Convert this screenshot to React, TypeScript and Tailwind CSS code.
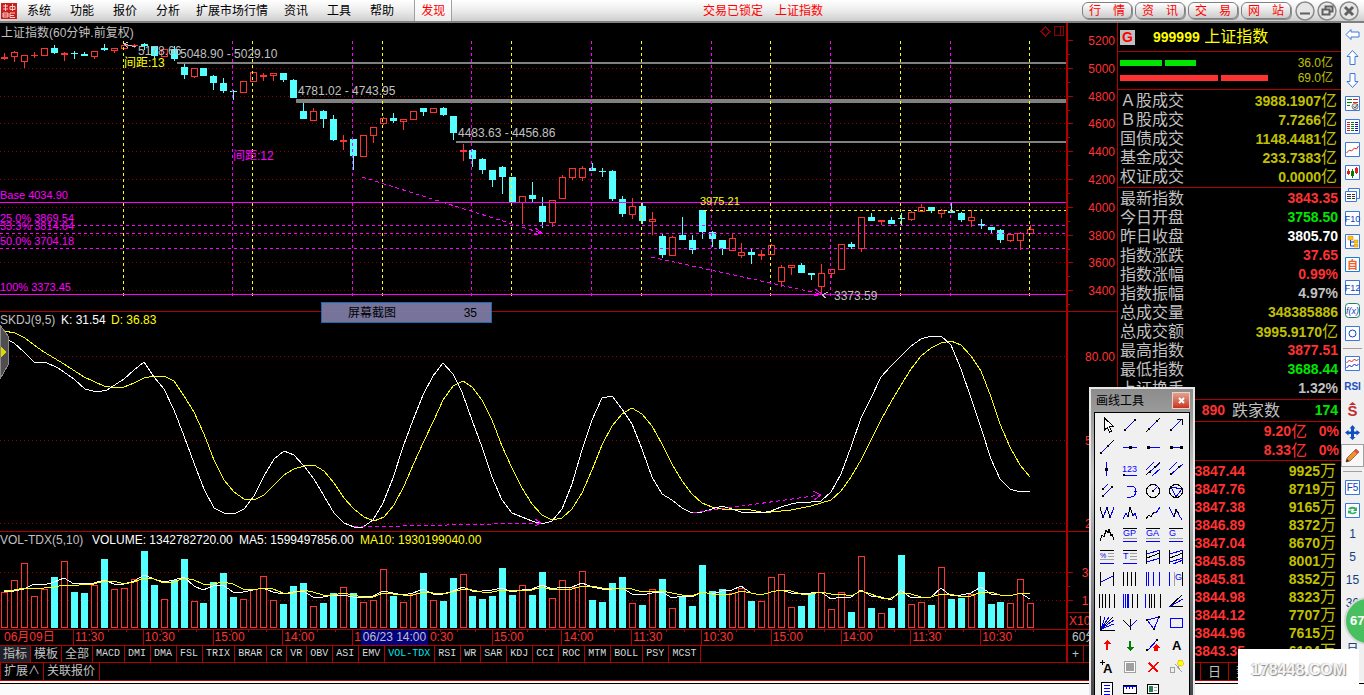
import type { ReactNode } from "react";

type Kind = "u" | "d";
// kind, high, top, bottom, low
type Candle = [Kind, number, number, number, number];

const SANS = "font-['Liberation_Sans','Noto_Sans_CJK_SC',sans-serif]";
const UP = "#ff3232";
const DOWN = "#54ffff";
const RULE = "#b00000";
const GRID = "#900000";
const MAGENTA = "#ff00ff";
const YELLOW = "#ffff00";

const candles: Candle[] = [
  ["u", 53, 57, 59, 60], ["u", 51, 52, 57, 62], ["u", 55, 55, 62, 68], ["u", 52, 55, 56, 58],
  ["u", 48, 48, 56, 56], ["d", 45, 48, 53, 54], ["u", 52, 53, 55, 61], ["d", 51, 53, 54, 59],
  ["d", 52, 54, 56, 56], ["u", 51, 51, 57, 59], ["d", 44, 48, 50, 51], ["u", 48, 48, 51, 53],
  ["u", 45, 45, 49, 49], ["u", 44, 45, 46, 48], ["d", 43, 44, 46, 50], ["d", 46, 46, 56, 58],
  ["u", 49, 49, 57, 57], ["d", 46, 49, 59, 61], ["d", 64, 67, 75, 79], ["u", 68, 68, 77, 78],
  ["d", 68, 68, 76, 76], ["d", 75, 76, 83, 90], ["d", 78, 83, 91, 93], ["d", 90, 91, 92, 100],
  ["u", 81, 81, 93, 93], ["u", 72, 72, 82, 82], ["u", 73, 75, 77, 81], ["u", 73, 73, 76, 81],
  ["d", 73, 73, 80, 82], ["d", 79, 80, 98, 98], ["d", 103, 111, 119, 119], ["u", 108, 111, 121, 121],
  ["d", 110, 111, 119, 128], ["d", 115, 119, 140, 141], ["u", 135, 140, 142, 150], ["d", 139, 139, 156, 170],
  ["u", 135, 135, 157, 157], ["u", 127, 127, 136, 143], ["u", 117, 118, 124, 125], ["d", 113, 118, 121, 123],
  ["u", 119, 119, 122, 130], ["u", 111, 111, 120, 120], ["d", 108, 108, 112, 116], ["u", 108, 108, 113, 113],
  ["d", 107, 108, 115, 116], ["d", 116, 116, 133, 140], ["u", 144, 150, 152, 161], ["d", 149, 150, 159, 167],
  ["d", 158, 159, 170, 174], ["d", 170, 170, 180, 187], ["d", 166, 167, 177, 194], ["d", 177, 177, 202, 202],
  ["u", 196, 196, 203, 224], ["d", 182, 195, 199, 202], ["d", 197, 206, 222, 228], ["u", 200, 200, 223, 227],
  ["u", 175, 177, 199, 199], ["u", 168, 168, 178, 180], ["u", 166, 168, 178, 181], ["d", 163, 168, 171, 171],
  ["d", 168, 171, 172, 177], ["d", 170, 171, 199, 201], ["d", 196, 199, 214, 217], ["u", 198, 206, 215, 219],
  ["d", 203, 206, 221, 224], ["u", 212, 219, 222, 235], ["d", 234, 236, 255, 258], ["u", 236, 237, 256, 256],
  ["d", 217, 235, 240, 240], ["d", 235, 240, 250, 254], ["d", 210, 210, 232, 239], ["d", 231, 232, 239, 247],
  ["d", 240, 240, 249, 255], ["u", 234, 238, 251, 251], ["u", 243, 252, 256, 258], ["d", 249, 252, 255, 264],
  ["u", 250, 254, 256, 260], ["u", 244, 245, 255, 255], ["u", 265, 267, 282, 287], ["u", 265, 265, 268, 275],
  ["d", 263, 265, 273, 273], ["d", 273, 273, 275, 280], ["u", 264, 273, 287, 294], ["u", 269, 269, 274, 278],
  ["u", 244, 244, 270, 270], ["d", 242, 244, 247, 249], ["u", 217, 217, 249, 252], ["d", 213, 217, 221, 221],
  ["u", 220, 220, 222, 225], ["d", 217, 220, 224, 224], ["d", 213, 218, 219, 225], ["u", 211, 212, 220, 221],
  ["u", 204, 207, 212, 212], ["d", 207, 207, 211, 213], ["u", 209, 210, 214, 218], ["d", 203, 211, 213, 213],
  ["d", 212, 213, 220, 222], ["u", 210, 217, 221, 227], ["d", 219, 224, 226, 229], ["d", 227, 227, 230, 233],
  ["d", 229, 230, 240, 243], ["u", 233, 234, 241, 242], ["u", 232, 233, 241, 250], ["u", 225, 229, 234, 234],
];

const volumes = [
  36, 48, 65, 32, 39, 51, 67, 36, 35, 43, 69, 39, 40, 49, 77, 43, 29, 48, 69, 27, 25, 46, 55, 31, 29, 39, 52, 28, 24, 42,
  45, 22, 25, 35, 41, 35, 26, 28, 59, 32, 26, 34, 55, 28, 27, 50, 54, 32, 29, 32, 60, 33, 43, 33, 56, 30, 48, 41, 57, 28,
  26, 45, 51, 25, 23, 39, 49, 20, 32, 22, 63, 37, 39, 35, 40, 27, 27, 51, 54, 21, 22, 34, 55, 19, 36, 16, 72, 20, 15, 20,
  73, 24, 26, 23, 61, 29, 30, 34, 56, 24, 26, 25, 49, 25,
];

const ma5 = [
  38, 38, 40, 45, 44, 47, 51, 45, 46, 46, 49, 45, 45, 48, 54, 50, 47, 49, 52, 43, 39, 43, 44, 37, 37, 39, 41, 37, 35, 37,
  38, 32, 32, 34, 34, 32, 32, 33, 38, 36, 34, 36, 40, 35, 35, 38, 42, 38, 38, 39, 41, 37, 39, 40, 44, 40, 42, 42, 46, 42,
  40, 40, 41, 35, 34, 36, 37, 31, 33, 32, 37, 35, 38, 39, 43, 36, 34, 37, 39, 36, 35, 36, 37, 30, 32, 32, 39, 33, 32, 29,
  39, 31, 32, 32, 41, 33, 34, 36, 42, 35, 34, 33, 36, 30,
];

const ma10 = [
  39, 39, 41, 40, 41, 42, 44, 43, 45, 45, 48, 48, 45, 47, 51, 50, 46, 47, 51, 49, 45, 45, 47, 45, 40, 39, 41, 40, 36, 36,
  39, 37, 34, 34, 36, 34, 32, 32, 36, 35, 34, 34, 37, 36, 35, 37, 40, 39, 37, 37, 39, 39, 38, 39, 42, 39, 40, 40, 43, 43,
  41, 40, 41, 40, 37, 38, 38, 36, 34, 33, 37, 35, 34, 35, 38, 36, 34, 37, 39, 38, 35, 35, 37, 35, 35, 33, 38, 35, 31, 31,
  36, 35, 32, 32, 35, 35, 32, 33, 37, 37, 34, 33, 36, 36,
];

const kLine =
  "4,338 14,343 24,352 34,362 45,362 58,368 74,379 85,389 97,392 107,390 124,379 134,370 144,362 154,377 164,389 174,410 184,436 194,463 204,489 214,508 224,513 234,514 244,509 254,496 264,476 274,459 284,451 294,455 304,466 314,479 324,496 334,513 344,523 354,527 363,527 373,520 383,503 393,478 403,447 413,420 423,395 433,376 443,363 453,374 462,392 472,420 482,447 492,477 502,500 512,513 522,517 532,521 542,524 552,521 562,509 572,484 582,450 592,420 602,398 612,396 622,409 632,424 642,449 652,477 662,494 672,500 682,508 692,513 702,512 712,509 722,506 732,509 741,512 751,512 761,513 771,511 781,507 791,504 801,502 811,502 821,501 831,492 841,474 851,447 861,418 871,398 881,377 891,366 901,356 911,346 921,339 931,336 941,336 951,345 961,369 971,398 981,428 991,459 1000,479 1010,489 1020,492 1030,491";
const dLine =
  "4,331 15,333 25,338 34,345 44,352 64,364 84,377 104,386 110,387 124,387 134,383 144,378 154,376 164,376 174,381 184,396 194,412 204,434 214,460 224,480 234,492 244,499 254,500 264,495 274,485 284,475 294,469 304,466 314,465 324,471 334,483 344,498 354,509 364,517 374,521 384,517 394,505 404,486 414,463 424,441 434,420 443,400 453,386 463,381 472,387 482,400 492,420 502,446 512,468 522,488 532,504 542,515 552,520 562,518 572,509 582,493 592,470 602,445 612,426 622,414 632,408 642,414 652,426 662,444 672,464 682,481 692,494 702,503 712,507 722,509 732,509 751,510 761,512 771,512 781,511 791,510 801,508 811,506 821,503 831,500 841,491 851,477 861,460 871,440 881,420 891,402 901,385 911,369 921,356 931,348 941,343 951,341 961,345 971,356 981,371 991,397 1000,424 1010,447 1020,465 1030,477";

const barX = (i: number) => 4 + i * 10 - [20, 47, 74, 100].filter((n) => i >= n).length;
const color = (kind: Kind) => (kind === "u" ? UP : DOWN);

const cursors: [number, string][] = [
  [123, YELLOW], [232, MAGENTA], [252, YELLOW], [352, MAGENTA], [382, YELLOW], [471, MAGENTA], [511, YELLOW],
  [591, MAGENTA], [641, YELLOW], [711, MAGENTA], [770, YELLOW], [830, MAGENTA], [900, YELLOW], [950, MAGENTA],
  [1029, YELLOW],
];

function HLine({ y, x = 0, stroke, dash, width = 1 }: { y: number; x?: number; stroke: string; dash?: string; width?: number }) {
  return <line x1={x} x2="100%" y1={y + 0.5} y2={y + 0.5} stroke={stroke} strokeDasharray={dash} strokeWidth={width} />;
}

function Body({ kind, x, top, height }: { kind: Kind; x: number; top: number; height: number }) {
  if (kind === "d" || height < 3) return <rect x={x - 3} y={top} width={7} height={height} fill={color(kind)} />;
  return <rect x={x - 2.5} y={top + 0.5} width={6} height={height - 1} fill="#000" stroke={UP} />;
}

function PriceChart() {
  return (
    <svg className="block h-[288px] w-full text-[12px]" shapeRendering="crispEdges" role="img" aria-label="上证指数 K线">
      <g transform="translate(0 -23)">
        {[68, 96, 123, 151, 179, 207, 235, 262, 290].map((y) => (
          <HLine key={y} y={y} stroke={GRID} dash="1 3" />
        ))}
        <HLine y={62.5} x={177} stroke="#808080" width={2} />
        <HLine y={100.5} x={296} stroke="#808080" width={4} />
        <HLine y={141.5} x={456} stroke="#808080" width={2} />
        {candles.map(([kind, high, top, bottom, low], i) => (
          <g key={i}>
            <rect x={barX(i)} y={high} width={1} height={low - high} fill={color(kind)} />
            <Body kind={kind} x={barX(i)} top={top} height={bottom - top} />
          </g>
        ))}
        {cursors.map(([x, stroke]) => (
          <line key={x} x1={x + 0.5} x2={x + 0.5} y1={41} y2={296} stroke={stroke} strokeDasharray="3 3" />
        ))}
        <HLine y={202} stroke={MAGENTA} />
        <HLine y={294} stroke={MAGENTA} />
        {[225, 233, 248].map((y) => (
          <HLine key={y} y={y} stroke={MAGENTA} dash="3 3" />
        ))}
        <HLine y={210} x={704} stroke={YELLOW} dash="3 3" />
        <g fill="none" stroke={MAGENTA}>
          <path d="M362 177L541 233M651 257L821 294" strokeDasharray="4 3" />
          <path d="M535 228l7 5l-8 2M815 289l7 5l-8 2" />
        </g>
        <path d="M136 47l-12-3l4-2m-4 2l4 4M828 292l-6 3l4 3" fill="none" stroke="#c0c0c0" />
        <g fill="#c0c0c0">
          <text x={1} y={37}>上证指数(60分钟.前复权)</text>
          <text x={138} y={55}>5178.66</text>
          <text x={180} y={58}>5048.90 - 5029.10</text>
          <text x={298} y={95}>4781.02 - 4743.95</text>
          <text x={458} y={137}>4483.63 - 4456.86</text>
          <text x={834} y={300}>3373.59</text>
        </g>
        <g fill={YELLOW}>
          <text x={124} y={67}>间距:13</text>
          <text x={700} y={205} className="text-[11px]">3975.21</text>
        </g>
        <g fill={MAGENTA}>
          <text x={233} y={160}>间距:12</text>
          <g className="text-[11px]">
            <text x={0} y={199}>Base 4034.90</text>
            <text x={0} y={222}>25.0% 3869.54</text>
            <text x={0} y={230}>33.3% 3814.64</text>
            <text x={0} y={245}>50.0% 3704.18</text>
            <text x={0} y={291}>100% 3373.45</text>
          </g>
        </g>
        <g fill="none" stroke={GRID}>
          <path d="M1045.5 27l4.5 4.5l-4.5 4.5l-4.5-4.5z" />
          <path d="M1054.5 26.5h9v9h-9zM1060.5 26.5v9" />
        </g>
      </g>
    </svg>
  );
}

function SkdjChart() {
  return (
    <svg className="block h-[219px] w-full text-[12px]" shapeRendering="crispEdges" role="img" aria-label="SKDJ">
      <g transform="translate(0 -312)">
        {[356, 440, 523].map((y) => (
          <HLine key={y} y={y} stroke={GRID} dash="1 3" />
        ))}
        <polyline points={dLine} fill="none" stroke={YELLOW} />
        <polyline points={kLine} fill="none" stroke="#fff" />
        <g fill="none" stroke={MAGENTA}>
          <path d="M354 527L541 523M693 513L820 495" strokeDasharray="4 3" />
          <path d="M535 519l6 4l-6 3M813 491l8 4l-7 5" />
        </g>
        <g>
          <text x={0} y={324} fill="#c0c0c0">SKDJ(9,5)</text>
          <text x={61} y={324} fill="#fff">K: 31.54</text>
          <text x={111} y={324} fill={YELLOW}>D: 36.83</text>
        </g>
        <path d="M0 325l8 11v29l-8 14z" fill="#504c50" stroke="#8a8a8a" />
        <path d="M1 347l5 5l-5 5z" fill="#dcdc00" />
      </g>
    </svg>
  );
}

function VolumeChart() {
  const points = (values: number[]) => values.map((v, i) => `${barX(i)},${97 - v}`).join(" ");
  return (
    <svg className="block h-[97px] w-full text-[12px]" shapeRendering="crispEdges" role="img" aria-label="成交量">
      <HLine y={40} stroke={GRID} dash="1 3" />
      <HLine y={68} stroke={GRID} dash="1 3" />
      {volumes.map((v, i) => (
        <Body key={i} kind={candles[i][0]} x={barX(i)} top={96 - v} height={v} />
      ))}
      <polyline points={points(ma5)} fill="none" stroke="#fff" />
      <polyline points={points(ma10)} fill="none" stroke={YELLOW} />
      <text x={0} y={12} fill="#c0c0c0">VOL-TDX(5,10)</text>
      <text x={92} y={12} fill="#fff">VOLUME: 1342782720.00</text>
      <text x={239} y={12} fill="#fff">MA5: 1599497856.00</text>
      <text x={360} y={12} fill={YELLOW}>MA10: 1930199040.00</text>
    </svg>
  );
}

function Axis({ labels, ticks, className }: { labels: [string, number][]; ticks: number[]; className: string }) {
  return (
    <svg className={`block w-[51px] shrink-0 border-l-2 border-[#b00000] text-[12px] ${className}`} shapeRendering="crispEdges">
      {ticks.map((y, i) => (
        <rect key={y} x={0} y={y} width={i % 2 ? 2 : 5} height={1} fill={RULE} />
      ))}
      {labels.map(([label, y]) => (
        <text key={label} x={47} y={y + 5} textAnchor="end" fill={UP}>
          {label}
        </text>
      ))}
    </svg>
  );
}

const priceLabels: [string, number][] = [
  ["5200", 17], ["5000", 45], ["4800", 73], ["4600", 100], ["4400", 128], ["4200", 156], ["4000", 184], ["3800", 212],
  ["3600", 239], ["3400", 267],
];
const priceTicks = priceLabels.flatMap(([, y]) => [y, y + 14]);

const times = ["11:30", "10:30", "15:00", "14:00", "1", "0:30", "15:00", "14:00", "11:30", "10:30", "15:00", "14:00", "11:30", "10:30"];

function TimeAxis() {
  return (
    <div className="flex h-4 border-b border-[#b00000] text-[12px] leading-[15px] text-[#ff3232]">
      <div className="relative flex min-w-0 flex-1 pr-4">
        <span className="w-[73px] shrink-0 pl-1">06月09日</span>
        {times.map((time, i) => (
          <span key={i} className="relative min-w-0 flex-1 border-l border-[#b00000] pl-px">
            <i className="absolute left-[17px] top-0 h-0.5 w-px bg-[#b00000]" />
            <i className="absolute left-[34px] top-0 h-0.5 w-px bg-[#b00000]" />
            <i className="absolute left-[52px] top-0 h-0.5 w-px bg-[#b00000]" />
            <span className={time === "0:30" ? "ml-1.5" : ""}>{time}</span>
          </span>
        ))}
        <span className="absolute left-[361px] top-0 h-[15px] w-[67px] bg-[#000080] text-center text-[#c0c0c0]">06/23 14:00</span>
      </div>
      <span className="w-[51px] shrink-0 overflow-hidden whitespace-nowrap border-l-2 border-[#b00000] pl-1 text-[#c0c0c0]">60分钟</span>
    </div>
  );
}

const indicators = [
  "MACD", "DMI", "DMA", "FSL", "TRIX", "BRAR", "CR", "VR", "OBV", "ASI", "EMV", "VOL-TDX", "RSI", "WR", "SAR", "KDJ",
  "CCI", "ROC", "MTM", "BOLL", "PSY", "MCST",
];

function IndicatorTabs() {
  return (
    <>
      <div className="flex h-[17px] border-b border-[#b00000] text-[12px] leading-4 text-[#c0c0c0]">
        <div className="flex min-w-0 flex-1 overflow-hidden">
          {["指标", "模板", "全部"].map((tab, i) => (
            <button key={tab} className={`shrink-0 border-r border-[#b00000] px-[3px] ${i === 0 ? "bg-[#202028]" : ""}`}>
              {tab}
            </button>
          ))}
          {indicators.map((tab) => (
            <button
              key={tab}
              className={`shrink-0 border-r border-[#b00000] pl-[3px] pr-1 font-['Liberation_Mono',monospace] text-[10px] ${
                tab === "VOL-TDX" ? "text-[#00e6e6]" : "text-[#d8d8d8]"
              }`}
            >
              {tab}
            </button>
          ))}
        </div>
        <div className="w-[51px] shrink-0 border-l-2 border-[#b00000]">
          <button className="w-4 border-r border-[#b00000]" aria-label="放大">+</button>
        </div>
      </div>
      <div className="flex h-[18px] border-b border-[#b00000] text-[12px] leading-[17px] text-[#c0c0c0]">
        <button className="border-x border-[#b00000] px-[3px]">扩展∧</button>
        <button className="border-r border-[#b00000] pl-[3px] pr-1">关联报价</button>
      </div>
    </>
  );
}

const turnover: [string, string][] = [
  ["Ａ股成交", "3988.1907"],
  ["Ｂ股成交", "7.7266"],
  ["国债成交", "1148.4481"],
  ["基金成交", "233.7383"],
  ["权证成交", "0.0000"],
];

const quotes: [string, string, string, string?][] = [
  ["最新指数", "3843.35", "text-[#ff3232]"],
  ["今日开盘", "3758.50", "text-[#00e600]"],
  ["昨日收盘", "3805.70", "text-white"],
  ["指数涨跌", "37.65", "text-[#ff3232]"],
  ["指数涨幅", "0.99%", "text-[#ff3232]"],
  ["指数振幅", "4.97%", "text-[#c0c0c0]"],
  ["总成交量", "348385886", "text-[#c0c000]"],
  ["总成交额", "3995.9170", "text-[#c0c000]", "亿"],
  ["最高指数", "3877.51", "text-[#ff3232]"],
  ["最低指数", "3688.44", "text-[#00e600]"],
  ["上证换手", "1.32%", "text-[#c0c0c0]"],
];

const deals: [string, string][] = [
  ["3847.44", "9925"], ["3847.76", "8719"], ["3847.38", "9165"], ["3846.89", "8372"], ["3847.04", "8670"],
  ["3845.85", "8001"], ["3845.81", "8352"], ["3844.98", "8323"], ["3844.12", "7707"], ["3844.96", "7615"],
  ["3843.35", "6184"],
];

function QuoteRow({ label, value, tone, unit }: { label: string; value: string; tone: string; unit?: string }) {
  return (
    <div className="flex h-[19px] items-center justify-between">
      <dt className="text-[16px] text-[#c0c0c0]">{label}</dt>
      <dd className={`text-[14px] font-bold ${tone}`}>
        {value}
        {unit && <span className="text-[16px] font-normal">{unit}</span>}
      </dd>
    </div>
  );
}

function QuotePanel() {
  return (
    <aside className="w-[224px] shrink-0 border-l border-[#b00000] leading-[19px]">
      <header className="flex h-[29px] items-center border-b border-[#b00000] pl-0.5">
        <span className="flex size-[15px] items-center justify-center bg-[#c0c0c0] text-[14px] font-bold leading-none text-[#ff0000]">G</span>
        <h1 className="ml-[18px] text-[16px] text-[#ffff00]">
          <b className="text-[14px]">999999</b> 上证指数
        </h1>
      </header>
      <div className="flex h-[38px] flex-col justify-center border-b border-[#b00000] pl-0.5 pr-2 text-[12px] leading-[15px] text-[#c0c000]">
        <div className="flex items-center gap-[3px]">
          <i className="h-1.5 w-[42px] bg-[#00e600]" />
          <i className="h-1.5 w-[31px] bg-[#00e600]" />
          <span className="ml-auto">36.0亿</span>
        </div>
        <div className="flex items-center gap-[3px]">
          <i className="h-1.5 w-[98px] bg-[#ff3232]" />
          <i className="h-1.5 w-[47px] bg-[#ff3232]" />
          <span className="ml-auto">69.0亿</span>
        </div>
      </div>
      <dl className="h-[98px] border-b border-[#b00000] pl-0.5 pr-1 pt-px">
        {turnover.map(([label, value]) => (
          <QuoteRow key={label} label={label} value={value} tone="text-[#c0c000]" unit="亿" />
        ))}
      </dl>
      <dl className="h-[212px] border-b border-[#b00000] pl-0.5 pr-[3px] pt-px">
        {quotes.map(([label, value, tone, unit]) => (
          <QuoteRow key={label} label={label} value={value} tone={tone} unit={unit} />
        ))}
      </dl>
      <div className="flex h-[22px] items-center border-b border-[#b00000] pr-[3px] text-[14px] font-bold">
        <span className="w-[107px] text-right text-[#ff3232]">890</span>
        <span className="ml-[7px] text-[16px] font-normal text-[#c0c0c0]">跌家数</span>
        <span className="ml-auto text-[#00e600]">174</span>
      </div>
      <div className="border-b border-[#b00000] pr-0.5 text-right text-[14px] font-bold text-[#ff3232]">
        {["9.20", "8.33"].map((amount) => (
          <div key={amount} className="flex h-[19px] items-center justify-end">
            {amount}
            <span className="text-[16px] font-normal">亿</span>
            <span className="w-8">0%</span>
          </div>
        ))}
      </div>
      <table className="mb-0.5 mt-px w-full text-right text-[14px] leading-[18px]">
        <tbody>
          {deals.map(([price, amount], i) => (
            <tr key={i} className="h-[18px] font-bold">
              <td className="w-[127px] p-0 text-[#ff3232]">{price}</td>
              <td className="p-0 pr-[5px] text-[#c0c000]">
                {amount}
                <span className="text-[16px] font-normal leading-none">万</span>
              </td>
            </tr>
          ))}
        </tbody>
      </table>
      <div className="flex h-[19px] border-y border-[#b00000] pl-[82px] text-[13px] leading-[17px] text-[#c0c0c0]">
        {["日", "势"].map((tab) => (
          <button key={tab} className="w-7 border-l border-[#b00000]">
            {tab}
          </button>
        ))}
      </div>
    </aside>
  );
}

function Frame({ children, stroke = "#3a78e0" }: { children?: ReactNode; stroke?: string }) {
  return (
    <>
      <path d="M.5.5h14v14h-14z" fill="#fff" stroke={stroke} />
      {children}
    </>
  );
}

function Glyph({ children, size = 9, x = 7.5, y = 11, fill = "#1040c0" }: { children: ReactNode; size?: number; x?: number; y?: number; fill?: string }) {
  return (
    <text x={x} y={y} fontSize={size} textAnchor="middle" fill={fill}>
      {children}
    </text>
  );
}

const sideTools: [string, ReactNode][] = [
  ["后退", <path d="M1 7.5L6 2.5V5h8v5H6v2.5z" fill="#fff" stroke="#3a78e0" />],
  ["上翻", <path d="M7.5 .5L13 6.5h-3v8H5v-8H2z" fill="#fff" stroke="#3a78e0" />],
  ["下翻", <path d="M7.5 14.5L13 8.5h-3v-8H5v8H2z" fill="#fff" stroke="#3a78e0" />],
  ["自选", <Frame><path d="M2 3.5h5M2 6.5h5M2 9.5h3" stroke="#008000" /><path d="M8 3.5h5M8 6.5h5" stroke="#e02020" /><circle cx="10" cy="10.5" r="3" fill="#ddd" stroke="#777" /><path d="M8.500 10.500l1.500 1.500l3-4" fill="none" stroke="#555" /></Frame>],
  ["行情表", <Frame><path d="M2 3.500h3M2 5.500h3M2 7.500h3M2 9.500h3M2 11.500h3" stroke="#e02020" /><path d="M6 3.500h3M6 5.500h3M6 7.500h3M6 9.500h3M6 11.500h3" stroke="#008000" /><path d="M10 3.500h3M10 5.500h3M10 7.500h3M10 9.500h3M10 11.500h3" stroke="#1010c0" /></Frame>],
  ["分时", <Frame><path d="M1.500 11l3-3l2 1l3-3l2 1l2-3" fill="none" stroke="#e02020" /></Frame>],
  ["K线", <Frame><path d="M3.500 4v6M11.500 2v7" stroke="#e02020" /><path d="M7.500 4v9" stroke="#008000" /><path d="M2 6h3v3H2zM10 3h3v5h-3z" fill="#e02020" /><path d="M6 6h3v5H6z" fill="#008000" /></Frame>],
  ["多股", <><path d="M3.500.5h11v10h-11z" fill="#fff" stroke="#3a78e0" /><path d="M.5 3.500h11v10H.5z" fill="#fff" stroke="#3a78e0" /><path d="M2 6.500h4M7 6.500h3M2 8.500h4M7 8.500h3M2 10.500h4M7 10.500h3" stroke="#333" /></>],
  ["F10", <Frame><Glyph>F10</Glyph></Frame>],
  ["板块", <Frame><path d="M3 2h5v4H3zM9 6h4v3H9zM9 10h4v3H9z" fill="#ffc020" stroke="#c09000" strokeWidth=".5" /><path d="M5.500 6v6H9M5.500 8H9" fill="none" stroke="#1040c0" /></Frame>],
  ["自选股", <Frame stroke="#1080e0"><text x="7.500" y="12" fontSize="11" fontWeight="bold" textAnchor="middle" fill="#f06030">自</text></Frame>],
  ["F12", <Frame><Glyph>F12</Glyph></Frame>],
  ["公式", <><rect x=".5" y=".5" width="14" height="14" rx="3" fill="#fff" stroke="#208060" /><text x="7.500" y="11" fontSize="9" fontStyle="italic" textAnchor="middle" fill="#1040c0">f(x)</text></>],
  ["圈", <Frame><circle cx="7.500" cy="7.500" r="3.500" fill="none" stroke="#1040c0" /></Frame>],
];

const sideTools2: [string, ReactNode][] = [
  ["叠加", <Frame><path d="M1.500 7l3-3l2 2l3-3l2 2l2-2" fill="none" stroke="#e02020" /><path d="M1.500 12l3-3l2 2l3-3l2 2l2-2" fill="none" stroke="#1010e0" /></Frame>],
  ["RSI", <text x="7.500" y="11" fontSize="10" fontWeight="bold" textAnchor="middle" fill="#2050c0">RSI</text>],
  ["S", <><text x="7.500" y="14" fontSize="15" fontWeight="bold" textAnchor="middle" fill="#c03030">S</text><path d="M4 3l3.500-3L11 3z" fill="#c03030" /></>],
  ["移动", <path d="M7.500 0l3 3.500H9v3h2.500V5L15 7.500l-3.500 3V9H9v3h1.500l-3 3l-3-3H6V9H3.500v1.500L0 7.500L3.500 5v1.500H6v-3H4.500z" fill="#1050c0" />],
  ["画线", <><path d="M2 10L11 1l3 3L5 13l-4 1z" fill="#f09030" stroke="#805020" strokeWidth=".7" /><path d="M11 1l3 3l-2 2l-3-3z" fill="#e05050" /><path d="M1 14l1-3l2 2z" fill="#222" /></>],
];

const sideTools3: [string, ReactNode][] = [
  ["F5", <Frame><Glyph size={10}>F5</Glyph></Frame>],
  ["刷新", <Frame><path d="M3 6a5 4 0 0 1 8-1l1-1v4H8l1.500-1.500a3 2.500 0 0 0-4 0zM12 9a5 4 0 0 1-8 1l-1 1V7.500h4L5.500 9a3 2.500 0 0 0 4 0z" fill="#30b060" /></Frame>],
  ...["1", "5", "15", "30", "60", "日"].map((n): [string, ReactNode] => [n, <Glyph key={n} size={12} y={12} fill="#104080">{n}</Glyph>]),
];

function SideGroup({ tools }: { tools: [string, ReactNode][] }) {
  return (
    <>
      {tools.map(([name, art]) => (
        <button
          key={name}
          aria-label={name}
          className={`flex h-[23px] w-full items-center justify-center ${name === "画线" ? "border border-[#a0a0a0] bg-[#f8f8f8]" : ""}`}
        >
          <svg className="size-[15px] shrink-0 overflow-visible" viewBox="0 0 15 15">
            {art}
          </svg>
        </button>
      ))}
    </>
  );
}

function SideBar() {
  return (
    <nav className="flex w-[23px] shrink-0 flex-col bg-[#f0f0f0]">
      <SideGroup tools={sideTools} />
      <div className="mx-0.5 my-[3px] h-px bg-[#a0a0a0]" />
      <SideGroup tools={sideTools2} />
      <div className="mx-0.5 my-1 h-px bg-[#a0a0a0]" />
      <SideGroup tools={sideTools3} />
    </nav>
  );
}

// blue / black / gray strokes, dots as small squares
const B = (d: string) => <path d={d} fill="none" stroke="#0000ff" />;
const K = (d: string) => <path d={d} fill="none" stroke="#000" />;
const G = (d: string) => <path d={d} fill="none" stroke="#a0a0a0" />;
const dots = (...at: [number, number][]) => at.map(([x, y]) => <rect key={`${x}-${y}`} x={x - 1} y={y - 1} width={2} height={2} fill="#000" />);
const T = (text: string, x: number, y: number, size = 9, fill = "#0000ff") => (
  <text x={x} y={y} fontSize={size} fill={fill}>
    {text}
  </text>
);
const levels = (text: string) => (
  <>
    {K("M1 1.500h14")}
    {T(text, 1, 9)}
    {G("M1 11.500h14")}
    {B("M1 14.500h14")}
  </>
);

const drawTools: [string, ReactNode][] = [
  ["选择", <path d="M5.500 1v12l3-2.500l2 4.500l2-1l-2-4.500h4z" fill="#fff" stroke="#000" />],
  ["线段", <>{B("M3 13L13 3")}{dots([3, 13], [13, 3])}</>],
  ["直线", <>{K("M1 15L15 1")}{B("M4 12L12 4")}{dots([4, 12], [12, 4])}</>],
  ["箭头", <>{B("M3 13L13 3")}{K("M9 2.500h5v5")}{dots([3, 13])}</>],
  ["射线", <>{B("M2 14L15 1")}{K("M9 7L15 1")}{dots([2, 14], [9, 7])}</>],
  ["水平线", <>{B("M1 8.500h14")}<path d="M7 7h3v3H7z" /></>],
  ["水平射线", <>{B("M2 8.500h13")}<path d="M2 7h3v3H2z" /></>],
  ["水平线段", <>{B("M2 8.500h12")}<path d="M2 7h3v3H2zM12 7h3v3h-3z" /></>],
  ["垂直线", <>{B("M7.500 1v14")}<path d="M6 7h3v3H6z" /></>],
  ["数字", <>{T("123", 0, 11, 9)}{B("M1 14.500h14")}{dots([2, 14])}</>],
  ["平行线", <>{B("M1 9L9 1M1 14L15 2M7 15L15 8")}{K("M1 14l4-4M10 6l5-5")}{dots([5, 11], [10, 6])}</>],
  ["平行射线", <>{B("M1 9L9 1M2 14L15 3")}{dots([3, 13], [11, 6])}</>],
  ["平行线段", <>{B("M3 7L9 1M4 13L14 3")}{dots([4, 6], [4, 13], [13, 4])}</>],
  ["圆弧", <>{B("M5 3h4a5 5.500 0 0 1 0 11H5")}{B("M12 8.500h3")}</>],
  ["圆", <><circle cx="8" cy="8" r="6.500" fill="none" stroke="#000" />{B("M8 8l5-5")}{dots([8, 8])}</>],
  ["外接圆", <><circle cx="8" cy="8" r="6.500" fill="none" stroke="#000" />{B("M3 4l11 2l-6 8z")}{dots([3, 4], [14, 6], [8, 14])}</>],
  ["W形", <>{B("M1 2l3 11l4-11l3 11l4-11")}{K("M1 2l3 11M8 2l3 11")}</>],
  ["三波", <>{B("M1 14l3-6l2 4l2-10l3 9l2-3l2 6")}{K("M6 12l2-10l3 9")}</>],
  ["上升波", <>{K("M1 14l3-4l2 2l3-5")}{B("M9 7l2 1l4-6")}</>],
  ["下降波", <>{B("M1 2l5 10l2-7l6 10")}{K("M6 12l2-8l3 5")}</>],
  ["八浪", K("M1 14l2-6l2 2l2-7l2 3l1-4l2 7l1-2l2 6")],
  ["GP", levels("GP")],
  ["GA", levels("GA")],
  ["G", levels("G")],
  ["百分比", <>{K("M1 1.500h14")}{G("M9 4.500h6M9 7.500h6M1 10.500h14")}{T("%", 1, 9, 7)}{B("M1 14.500h14")}</>],
  ["波段线", <>{K("M1 1.500h14")}{G("M8 4.500h7M8 7.500h7M8 10.500h7")}{T("T", 1, 10, 9)}{B("M1 14.500h14")}</>],
  ["通道", <>{K("M1.500 1v14M14.500 1v14M2 9l13-5")}{B("M2 5l13-4M2 13l13-4")}</>],
  ["回归通道", <>{K("M1.500 1v14M14.500 1v14M2 9l13-5")}{B("M2 5l13-4M2 13l13-4M5 15l10-4")}</>],
  ["回归线", <>{K("M1.500 1v14M14.500 1v14")}{B("M2 11L14 5")}</>],
  ["周期线", K("M1.500 1v14M5.500 1v14M9.500 1v14M13.500 1v14")],
  ["斐波那契", B("M1.500 1v14M3.500 1v14M8.500 1v14M14.500 1v14")],
  ["时间G", <>{B("M1.500 1v14")}{G("M6.500 1v14")}{T("G", 7, 9, 9)}{K("M14.500 1v14")}</>],
  ["等距线", K("M.5 1v14M3.500 1v14M6.500 1v14M10.500 1v14M15.500 1v14")],
  ["江恩周期", <>{B("M1.500 1v14M3.500 1v14M5.500 1v14M6.500 1v14")}{K("M10.500 1v14M15.500 1v14")}</>],
  ["时间周期", <>{B("M.5 1v14")}{K("M4.500 1v14M6.500 1v14M9.500 1v14M15.500 1v14")}</>],
  ["速阻线", <>{K("M1 14L14 2M1 14l14-1")}{B("M1 14l14-8")}</>],
  ["江恩角", <>{K("M1.500 1v14h14M1.500 15L14 2")}{B("M2 14L6 2M2 14l13-5M2 14L10 2M2 14l13-9")}</>],
  ["分叉", <>{K("M1 5l7 7V4")}{B("M8 12l7-7")}{K("M8 12v3")}</>],
  ["三角形", <>{B("M2 5l12-3l-5 12z")}{dots([2, 5], [14, 2], [9, 14])}</>],
  ["矩形", <>{B("M2 3.500h12v9H2z")}</>],
  ["红箭头", <path d="M8 3l4 4H9v6H7V7H4z" fill="#ff0000" />],
  ["绿箭头", <path d="M8 14l4-4H9V4H7v6H4z" fill="#008000" />],
  ["标注", <>{B("M2 14L13 2")}{dots([2, 13], [12, 3])}<path d="M11 7l4 4h-2v3H9v-3H7z" fill="#ff0000" /></>],
  ["文字", <text x="4" y="13" fontSize="13" fontWeight="bold">A</text>],
  ["加文字", <><text x="4" y="14" fontSize="13" fontWeight="bold">A</text>{K("M1 3.500h5M3.500 1v5")}</>],
  ["填充", <><path d="M2.500 2.500h11v11h-11z" fill="#fff" stroke="#a0a0a0" /><path d="M4 4h8v8H4z" fill="#a0a0a0" /></>],
  ["删除", <path d="M4 4l9 9M13 3L4 13" stroke="#ff0000" strokeWidth="1.500" />],
  ["隐藏", <>{G("M2.500 8.500h4v5h-4zM7 5l7 8M9 9l4-4")}<circle cx="12.500" cy="4" r="3" fill="#ffff00" stroke="#c0a000" strokeWidth=".5" /></>],
  ["列表", <><path d="M2.500 1.500h11v13h-11z" fill="#fff" stroke="#000" />{B("M5 4.500h6M5 7.500h6M5 10.500h6M5 13.500h6")}</>],
  ["标尺", <><path d="M1.500 4.500h13v8h-13z" fill="#fff" stroke="#000" />{B("M1 5h14M4.500 5v3M7.500 5v3M10.500 5v3")}</>],
  ["设置", <><path d="M2.500 3.500h11v9h-11z" fill="#fff" stroke="#000" /><path d="M4 5h4v6H4z" fill="#208050" />{G("M9 6.500h3M9 9.500h3")}</>],
];

function DrawPalette() {
  return (
    <section className="absolute bottom-0 right-[169px] top-[387px] w-[106px] overflow-hidden border-2 border-b-0 border-[#e8e8e8] bg-linear-to-b from-[#8c8c8c] via-[#c8c8c8] via-30% to-[#44484c] px-[3px]">
      <header className="flex h-[23px] items-center justify-between pl-0.5 text-[12px] text-black">
        <h2>画线工具</h2>
        <button aria-label="关闭" className="flex h-[17px] w-[18px] items-center justify-center border border-[#f0d0c8] bg-linear-to-b from-[#e0a090] to-[#c83018]">
          <svg className="size-[7px]" viewBox="0 0 7 7">
            <path d="M1 1l5 5M6 1L1 6" stroke="#fff" strokeWidth="2" />
          </svg>
        </button>
      </header>
      <div className="grid grid-cols-4 border border-black bg-[#f0f0f0] pr-0.5 pt-px">
        {drawTools.map(([name, art]) => (
          <button key={name} aria-label={name} className="flex h-[22px] items-center justify-center">
            <svg className="size-4" viewBox="0 0 16 16" shapeRendering="crispEdges">
              {art}
            </svg>
          </button>
        ))}
      </div>
    </section>
  );
}

const menuGroups = [["系统", "功能", "报价", "分析"], ["扩展市场行情"], ["资讯", "工具", "帮助"]];

function MenuBar() {
  return (
    <header className="flex h-[23px] items-center border-b-2 border-[#808080] bg-linear-to-b from-white via-[#ececec] to-[#cfcfcf] text-[12px] text-black">
      <svg className="ml-px size-4 shrink-0" viewBox="0 0 16 16">
        <path d="M0 0h16v16H0z" fill="#c81e1e" />
        <path d="M2 3h5M2 6h5M4.500 1v7M9 3.500h5v3H9zM11.500 1v7M2 10h5v4H2zM2 12h5M9 10h5M9 12.500h4M9 10v4.500h5" fill="none" stroke="#ffe0d8" strokeWidth=".9" />
      </svg>
      <nav className="ml-2.5 flex gap-4">
        {menuGroups.map((group) => (
          <div key={group[0]} className="flex gap-[19px]">
            {group.map((item) => (
              <button key={item} className="whitespace-nowrap">
                {item}
              </button>
            ))}
          </div>
        ))}
      </nav>
      <button className="ml-5 h-[21px] border-x border-[#a0a0a0] bg-white/60 px-1.5 text-[#ff0000]">发现</button>
      <p className="ml-auto mr-[259px] flex gap-3 whitespace-nowrap text-[#ff0000]">
        <span>交易已锁定</span>
        <span>上证指数</span>
      </p>
      <div className="flex gap-[3px]">
        {["行情", "资讯", "交易", "网站"].map((label) => (
          <button
            key={label}
            aria-label={label}
            className="flex h-[17px] w-[50px] items-center justify-between rounded-md border border-[#808080] bg-linear-to-b from-white to-[#cccccc] px-1.5 text-[#ff0000] shadow-[1px_1px_0_#909090]"
          >
            <span>{label[0]}</span>
            <span>{label[1]}</span>
          </button>
        ))}
      </div>
      <div className="ml-1 mr-[5px] flex gap-0.5">
        {[
          ["最小化", "M5 12.500h10"],
          ["还原", "M8.500 8V5.500h7v5H13M5.500 8.500h7v5h-7z"],
          ["关闭", "M6 6l8 8M14 6l-8 8"],
        ].map(([name, d], i) => (
          <button key={name} aria-label={name}>
            <svg className="size-5" viewBox="0 0 20 20">
              <circle cx="10" cy="10" r="9" fill="#e6e6e6" stroke="#8a8a8a" strokeWidth="1.500" />
              <path d={d} fill="none" stroke="#606060" strokeWidth={i === 2 ? 3 : 2} />
            </svg>
          </button>
        ))}
      </div>
    </header>
  );
}

export default function App() {
  return (
    <main className={`relative flex min-h-screen flex-col overflow-hidden bg-[#fbfbfb] ${SANS}`}>
      <MenuBar />
      <div className="flex bg-black">
        <div className="min-w-0 flex-1">
          <div className="flex border-b border-[#b00000]">
            <div className="min-w-0 flex-1">
              <PriceChart />
            </div>
            <Axis className="h-[288px]" labels={priceLabels} ticks={priceTicks} />
          </div>
          <div className="flex border-b border-[#b00000]">
            <div className="min-w-0 flex-1">
              <SkdjChart />
            </div>
            <Axis className="h-[219px]" labels={[["80.00", 44], ["50.00", 128], ["20.00", 211]]} ticks={[]} />
          </div>
          <div className="flex border-b border-[#b00000]">
            <div className="min-w-0 flex-1">
              <VolumeChart />
            </div>
            <div className="w-[51px] shrink-0">
              <Axis className="h-[80px]" labels={[["30000", 40], ["15000", 68]]} ticks={[40, 54, 68]} />
              <div className="h-[17px] border-l-2 border-t border-[#b00000] pl-px text-[12px] leading-4 text-[#ff3232]">X10万</div>
            </div>
          </div>
          <TimeAxis />
          <IndicatorTabs />
        </div>
        <QuotePanel />
        <SideBar />
      </div>
      <footer className="mt-0.5 border-t border-black" />

      <div className="absolute left-[321px] top-[302px] flex h-[21px] w-[171px] items-center justify-between border border-[#1e66b4] bg-[#7c7aa3]/95 pl-[26px] pr-3.5 text-[12px] text-black">
        <span>屏幕截图</span>
        <span>35</span>
      </div>
      <DrawPalette />
      <div className="absolute -right-7 top-[597px] flex size-12 items-center rounded-full border-2 border-[#d8d8d8] bg-[#48c060] pl-1 text-[13px] font-bold text-white">67</div>
      <div className="absolute right-[5px] top-[649px] flex h-[41px] w-[121px] items-center justify-center bg-white text-[16px] font-bold text-[#f4f4f4] [text-shadow:1px_1px_1px_#888,-1px_0_1px_#bbb]">
        178448.COM
      </div>
    </main>
  );
}
